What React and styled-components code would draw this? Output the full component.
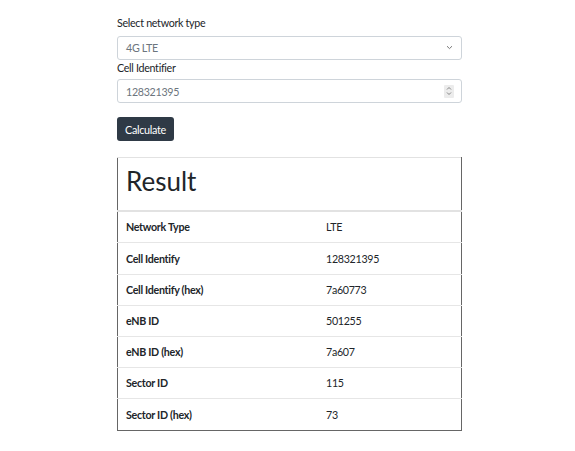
import React from 'react';
import styled, { createGlobalStyle } from 'styled-components';

const GlobalStyle = createGlobalStyle`
  body {
    margin: 0;
    background: #fff;
    font-family: Lato, "Open Sans", sans-serif;
    color: #212529;
  }
`;

const Page = styled.div`
  width: 345px;
  margin-left: 117px;
  padding-top: 15px;
`;

const Label = styled.label`
  display: block;
  font-size: 10.7px;
  letter-spacing: -0.3px;
  line-height: 15.6px;
  margin-bottom: ${p => p.gap}px;
`;

const Field = styled.div`
  position: relative;
  box-sizing: border-box;
  height: 24px;
  border: 1px solid #ced4da;
  border-radius: 3px;
  display: flex;
  align-items: center;
  padding: 0 8px;
  font-size: 10.7px;
  letter-spacing: -0.3px;
  color: #6c757d;
`;

const FieldText = styled.span`
  flex: 1;
`;

const Spinner = styled.span`
  display: flex;
  align-items: center;
  justify-content: center;
  width: 10px;
  height: 13px;
  background: #ececec;
  border-radius: 1px;
  margin-right: -1px;
`;

const Button = styled.button`
  display: block;
  margin-top: 14px;
  height: 24px;
  width: 57px;
  padding: 0;
  background: #2f3a46;
  color: #fff;
  border: none;
  border-radius: 3px;
  font-family: Lato, sans-serif;
  font-size: 10.8px;
  letter-spacing: -0.3px;
`;

const Table = styled.table`
  margin-top: 16px;
  width: 345px;
  border-collapse: collapse;
  border-left: 1px solid #666;
  border-right: 1px solid #666;
  border-bottom: 1px solid #666;
  border-top: 1px solid #e2e2e2;
  font-size: 10.7px;
  letter-spacing: -0.3px;
`;

const HeadCell = styled.th`
  text-align: left;
  font-weight: 400;
  padding: 8px 8px 8px;
  border-bottom: 2px solid #e2e2e2;
`;

const Title = styled.h1`
  margin: 0 0 5px;
  font-size: 26px;
  letter-spacing: 0;
  line-height: 31px;
  font-weight: 400;
`;

const Row = styled.tr`
  & + & td {
    border-top: 1px solid #e6e6e6;
  }
`;

const Cell = styled.td`
  padding: 7.3px 8px;
  line-height: 15.6px;
  font-weight: ${p => (p.bold ? 700 : 400)};
  width: ${p => (p.bold ? '184px' : 'auto')};
`;

const rows = [
  ['Network Type', 'LTE'],
  ['Cell Identify', '128321395'],
  ['Cell Identify (hex)', '7a60773'],
  ['eNB ID', '501255'],
  ['eNB ID (hex)', '7a607'],
  ['Sector ID', '115'],
  ['Sector ID (hex)', '73'],
];

export default function App() {
  return (
    <>
      <GlobalStyle />
      <Page>
        <Label gap={5}>Select network type</Label>
        <Field>
          <FieldText>4G LTE</FieldText>
          <svg width="7" height="5" viewBox="0 0 7 5">
            <path d="M1 1.2 L3.5 3.6 L6 1.2" fill="none" stroke="#777" strokeWidth="1" />
          </svg>
        </Field>
        <Label gap={4}>Cell Identifier</Label>
        <Field>
          <FieldText>128321395</FieldText>
          <Spinner>
            <svg width="6" height="10" viewBox="0 0 6 10">
              <path d="M1 3.5 L3 1.5 L5 3.5 M1 6.5 L3 8.5 L5 6.5" fill="none" stroke="#777" strokeWidth="0.9" />
            </svg>
          </Spinner>
        </Field>
        <Button>Calculate</Button>
        <Table>
          <thead>
            <tr>
              <HeadCell colSpan={2}>
                <Title>Result</Title>
              </HeadCell>
            </tr>
          </thead>
          <tbody>
            {rows.map(([k, v]) => (
              <Row key={k}>
                <Cell bold>{k}</Cell>
                <Cell>{v}</Cell>
              </Row>
            ))}
          </tbody>
        </Table>
      </Page>
    </>
  );
}
